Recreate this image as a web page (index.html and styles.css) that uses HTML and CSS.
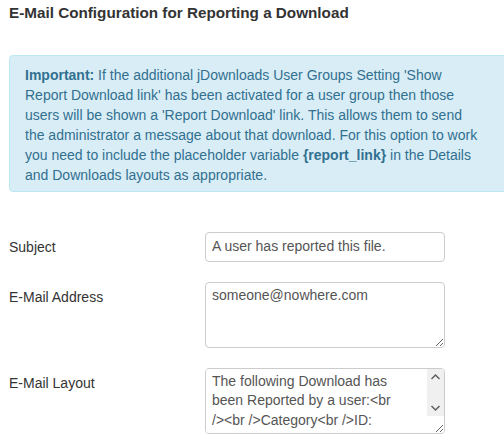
FILE: index.html
```html
<!DOCTYPE html>
<html lang="en">
<head>
<meta charset="utf-8">
<title>E-Mail Configuration for Reporting a Download</title>
<link rel="stylesheet" href="styles.css">
</head>
<body>
<div class="page">
  <h3 class="title">E-Mail Configuration for Reporting a Download</h3>
  <div class="alert">
    <strong>Important:</strong> If the additional jDownloads User Groups Setting 'Show Report Download link' has been activated for a user group then those users will be shown a 'Report Download' link. This allows them to send the administrator a message about that download. For this option to work you need to include the placeholder variable <strong>{report_link}</strong> in the Details and Downloads layouts as appropriate.
  </div>
  <form class="form">
    <div class="row">
      <label class="label" for="subject">Subject</label>
      <div class="controls">
        <input class="input" id="subject" type="text" value="A user has reported this file.">
      </div>
    </div>
    <div class="row">
      <label class="label" for="address">E-Mail Address</label>
      <div class="controls">
        <textarea class="textarea" id="address">someone@nowhere.com</textarea>
      </div>
    </div>
    <div class="row">
      <label class="label" for="layout">E-Mail Layout</label>
      <div class="controls scroll-wrap">
        <textarea class="textarea textarea-scroll" id="layout">The following Download has been Reported by a user:&lt;br /&gt;&lt;br /&gt;Category&lt;br /&gt;ID: {cat_id}&lt;br /&gt;Title: {cat_title}&lt;br /&gt;&lt;br /&gt;Download&lt;br /&gt;ID: {file_id}&lt;br /&gt;Title: {file_title}&lt;br /&gt;&lt;br /&gt;Reported by: {user_name}&lt;br /&gt;E-Mail: {user_email}&lt;br /&gt;Date: {date_time}&lt;br /&gt;&lt;br /&gt;Reason: {reason}</textarea>
        <div class="fake-scrollbar" aria-hidden="true">
          <svg class="sb-btn" width="17" height="17" viewBox="0 0 17 17"><path d="M4.5 10 L8.5 6 L12.5 10" fill="none" stroke="#606060" stroke-width="1.5"/></svg>
          <svg class="sb-btn" width="17" height="17" viewBox="0 0 17 17"><path d="M4.5 7 L8.5 11 L12.5 7" fill="none" stroke="#606060" stroke-width="1.5"/></svg>
        </div>
      </div>
    </div>
  </form>
</div>
</body>
</html>
```
FILE: styles.css
```css
html, body {
  margin: 0;
  padding: 0;
  background: #ffffff;
}

body {
  font-family: "Liberation Sans", Arial, sans-serif;
  font-size: 14px;
  line-height: 20px;
  color: #333333;
}

.page {
  padding: 3px 0 0 9px;
  overflow: hidden;
}

.title {
  margin: 0;
  font-size: 15.25px;
  line-height: 20px;
  font-weight: bold;
  color: #333333;
}

.alert {
  width: 460px;
  margin-top: 32px;
  padding: 9px 35px 6px 15px;
  background: #d9edf7;
  border: 1px solid #bce8f1;
  border-radius: 4px;
  color: #31708f;
}

.alert strong {
  font-weight: bold;
}

.form {
  margin: 40px 0 0;
}

.row {
  display: flex;
  align-items: flex-start;
  margin-bottom: 20px;
}

.label {
  width: 196px;
  flex: none;
  padding-top: 5px;
  color: #333333;
}

.controls {
  width: 240px;
  flex: none;
}

.scroll-wrap {
  position: relative;
}

.input,
.textarea {
  display: block;
  box-sizing: border-box;
  width: 240px;
  margin: 0;
  border: 1px solid #cccccc;
  border-radius: 4px;
  background: #ffffff;
  color: #555555;
  font-family: "Liberation Sans", Arial, sans-serif;
  font-size: 14px;
}

.input {
  height: 30px;
  padding: 3px 6px 5px;
  line-height: 20px;
}

.textarea {
  height: 66px;
  padding: 3px 6px;
  line-height: 19.4px;
  resize: both;
  overflow: auto;
}

.textarea-scroll {
  padding-right: 40px;
}

.fake-scrollbar {
  position: absolute;
  top: 1px;
  right: 1px;
  width: 17px;
  height: 47px;
  background: #f0f0f0;
  border-top-right-radius: 3px;
  display: flex;
  flex-direction: column;
  justify-content: space-between;
  pointer-events: none;
}

.sb-btn {
  display: block;
}
```
